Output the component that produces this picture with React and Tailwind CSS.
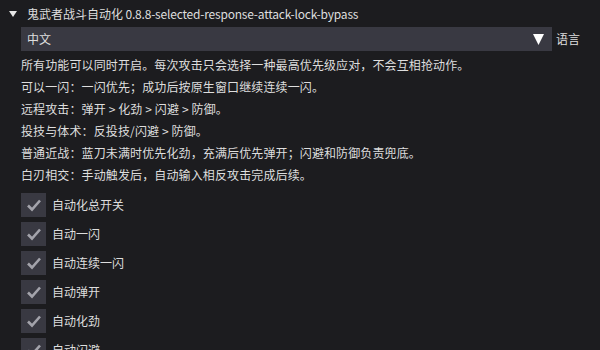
import React from "react";

const lines = [
  "所有功能可以同时开启。每次攻击只会选择一种最高优先级应对，不会互相抢动作。",
  "可以一闪：一闪优先；成功后按原生窗口继续连续一闪。",
  "远程攻击：弹开 > 化劲 > 闪避 > 防御。",
  "投技与体术：反投技/闪避 > 防御。",
  "普通近战：蓝刀未满时优先化劲，充满后优先弹开；闪避和防御负责兜底。",
  "白刃相交：手动触发后，自动输入相反攻击完成后续。",
];

const checks = ["自动化总开关", "自动一闪", "自动连续一闪", "自动弹开", "自动化劲", "自动闪避"];

function Check() {
  return (
    <svg width="16" height="14" viewBox="0 0 16 14">
      <path d="M2 7.5 L6 11.5 L14 2.5" fill="none" stroke="#a3a3ab" strokeWidth="2.6" strokeLinecap="butt" strokeLinejoin="miter" />
    </svg>
  );
}

export default function App() {
  return (
    <div
      className="w-[600px] h-[350px] overflow-hidden bg-[#1c1c1f] text-[#dedede] text-[12px]"
      style={{ fontFamily: '"Noto Sans CJK SC", "Noto Sans", sans-serif' }}
    >
      <div className="flex items-center h-[16px] mt-[6px] pl-[9px]">
        <svg width="8" height="6" viewBox="0 0 8 6" className="mr-[10px]">
          <path d="M0 0 L8 0 L4 6 Z" fill="#e6e6e6" />
        </svg>
        <span className="leading-[16px] whitespace-nowrap">
          鬼武者战斗自动化
          <span className="tracking-[-0.2px]"> 0.8.8-selected-response-attack-lock-bypass</span>
        </span>
      </div>
      <div className="flex items-center mt-[5px] pl-[21px]">
        <div className="flex items-center w-[531px] h-[24px] bg-[#393942]">
          <span className="pl-[6px] flex-1 leading-[24px]">中文</span>
          <div className="w-[24px] h-[24px] flex items-center justify-center">
            <svg width="11" height="11" viewBox="0 0 11 11" className="ml-[-4px]">
              <path d="M0 0 L11 0 L5.5 11 Z" fill="#ffffff" />
            </svg>
          </div>
        </div>
        <span className="ml-[4px] leading-[24px]">语言</span>
      </div>
      <div className="flex flex-col pl-[21px] mt-[3px]">
        {lines.map((l, i) => (
          <div key={i} className="h-[22px] leading-[22px] whitespace-nowrap tracking-[0.12px]">{l}</div>
        ))}
      </div>
      <div className="flex flex-col gap-[5px] pl-[21px] mt-[7px]">
        {checks.map((c, i) => (
          <div key={i} className="flex items-center h-[24px]">
            <div className="w-[25px] h-[24px] bg-[#393942] flex items-center justify-center">
              <Check />
            </div>
            <span className="ml-[6px] leading-[24px]">{c}</span>
          </div>
        ))}
      </div>
    </div>
  );
}
